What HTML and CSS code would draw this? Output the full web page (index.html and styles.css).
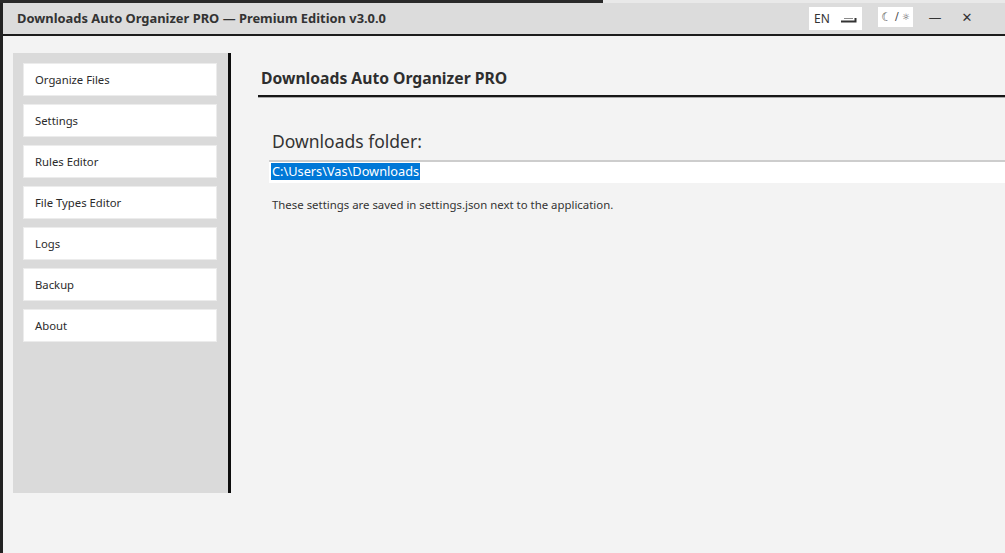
FILE: index.html
```html
<!DOCTYPE html>
<html lang="en">
<head>
<meta charset="utf-8">
<title>Downloads Auto Organizer PRO</title>
<link rel="stylesheet" href="styles.css">
</head>
<body>
<div class="desk-strip">
  <div class="desk-dark"></div>
  <div class="desk-light"></div>
</div>
<div class="window">
  <header class="titlebar">
    <div class="title">Downloads Auto Organizer PRO — Premium Edition v3.0.0</div>
    <div class="title-controls">
      <div class="lang-box">
        <span class="lang-text">EN</span>
        <svg class="lang-icon" width="17" height="7" viewBox="0 0 17 7">
          <path d="M4 2.5 H13" stroke="#8a8a8a" stroke-width="1"/>
          <path d="M1 5.5 H15.5 V2" stroke="#333" stroke-width="2" fill="none"/>
        </svg>
      </div>
      <div class="theme-box"><span class="moon">☾</span><span class="slash">/</span><span class="sun">☼</span></div>
      <div class="win-btn minimize">—</div>
      <div class="win-btn close">✕</div>
    </div>
  </header>
  <div class="body">
    <nav class="sidebar">
      <div class="nav-btn">Organize Files</div>
      <div class="nav-btn">Settings</div>
      <div class="nav-btn">Rules Editor</div>
      <div class="nav-btn">File Types Editor</div>
      <div class="nav-btn">Logs</div>
      <div class="nav-btn">Backup</div>
      <div class="nav-btn">About</div>
    </nav>
    <main class="content">
      <h1 class="page-title">Downloads Auto Organizer PRO</h1>
      <div class="form">
        <label class="field-label">Downloads folder:</label>
        <div class="field-input"><span class="selected">C:\Users\Vas\Downloads</span></div>
        <p class="note">These settings are saved in settings.json next to the application.</p>
      </div>
    </main>
  </div>
</div>
</body>
</html>
```

FILE: styles.css
```css
* { box-sizing: border-box; }

html, body {
  margin: 0;
  height: 100%;
  overflow: hidden;
}

body {
  background: #f3f3f3;
  font-family: "Noto Sans", "Open Sans", sans-serif;
  color: #333;
}

/* sliver of desktop above the window */
.desk-strip {
  display: flex;
  height: 3px;
}
.desk-dark { width: 603px; background: #2a2a2a; }
.desk-light { flex: 1; background: #e9e9e9; }

.window {
  height: 550px;
  border-left: 3px solid #222;
  display: flex;
  flex-direction: column;
}

/* title bar */
.titlebar {
  height: 33px;
  background: #dcdcdc;
  border-bottom: 2px solid #1c1c1c;
  display: flex;
  align-items: center;
  justify-content: space-between;
  padding-left: 14px;
}
.title {
  font-weight: 700;
  font-size: 12.9px;
  color: #333;
  margin-top: -2px;
}
.title-controls {
  display: flex;
  align-items: center;
  margin-top: -2px;
}
.lang-box {
  width: 53px;
  height: 23px;
  background: #fff;
  display: flex;
  align-items: center;
  padding-left: 5px;
  margin-top: 1px;
}
.lang-text {
  font-size: 12px;
  color: #333;
}
.lang-icon { margin-left: 10px; margin-top: 3px; }

.theme-box {
  width: 35px;
  height: 20px;
  background: #fff;
  margin-left: 16px;
  display: flex;
  align-items: center;
  justify-content: center;
  gap: 3px;
  font-family: "DejaVu Sans", sans-serif;
  color: #444;
  margin-top: -2px;
}
.moon { font-size: 12px; }
.slash { font-size: 11px; }
.sun { font-size: 9px; }

.win-btn {
  width: 32px;
  text-align: center;
  font-family: "DejaVu Sans", sans-serif;
  color: #333;
}
.minimize { font-size: 13px; margin-left: 6px; }
.close { font-size: 13px; margin-right: 22px; }

/* main area */
.body {
  flex: 1;
  display: flex;
}

.sidebar {
  width: 218px;
  height: 440px;
  margin: 17px 0 0 10px;
  background: #dadada;
  border-right: 3px solid #0d0d0d;
  padding: 10px 11px 0 10px;
  display: flex;
  flex-direction: column;
  gap: 8px;
}
.nav-btn {
  height: 33px;
  background: #fff;
  border: 1px solid #ececec;
  display: flex;
  align-items: center;
  padding-left: 11px;
  padding-bottom: 1px;
  font-size: 11.3px;
  color: #2b2b2b;
}

.content {
  flex: 1;
  padding-top: 17px;
  padding-left: 27px;
}
.page-title {
  margin: 0;
  font-size: 15.7px;
  font-weight: 700;
  line-height: 20px;
  padding: 15px 0 7px 3px;
  border-bottom: 2px solid #161616;
  box-shadow: 0 1px 0 #a8a8a8;
  color: #2e2e2e;
}

.form {
  padding-left: 14px;
  padding-top: 33px;
}
.field-label {
  display: block;
  font-size: 17.5px;
  line-height: 22px;
  color: #333;
}
.field-input {
  margin-top: 8px;
  margin-left: -3px;
  height: 23px;
  background: #fff;
  border-top: 2px solid #cdcdcd;
  padding: 1px 0 0 2px;
  display: flex;
  align-items: flex-start;
}
.selected {
  background: #0078d7;
  color: #fff;
  font-size: 12.75px;
  line-height: 17px;
  padding: 0 1px;
}
.note {
  margin: 14px 0 0;
  font-size: 11.4px;
  color: #333;
}
```
